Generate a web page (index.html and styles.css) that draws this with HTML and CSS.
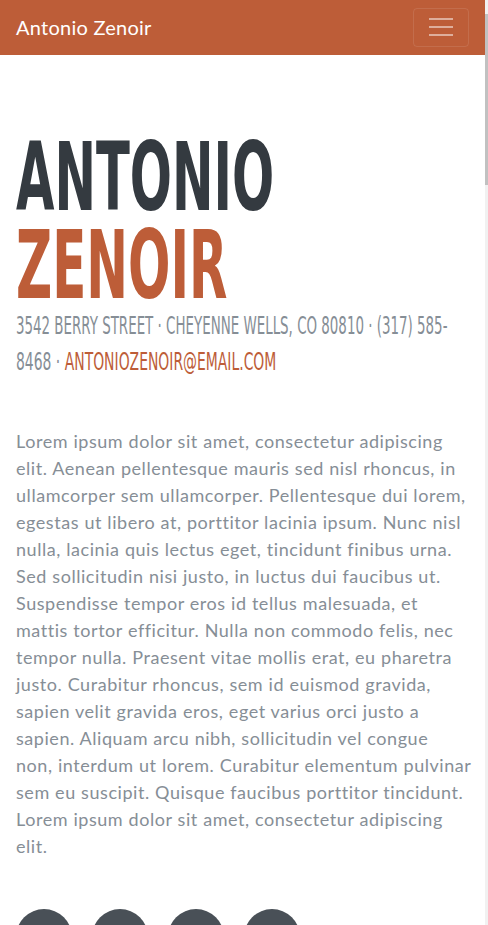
FILE: index.html
```html
<!DOCTYPE html>
<html lang="en">
<head>
<meta charset="utf-8">
<title>Antonio Zenoir - Resume</title>
<link rel="stylesheet" href="styles.css">
</head>
<body>
<div class="viewport">
  <div class="page">
    <nav class="navbar">
      <a class="brand" href="#about">Antonio Zenoir</a>
      <button class="toggler" type="button" aria-label="Toggle navigation">
        <span class="toggler-bar"></span>
        <span class="toggler-bar"></span>
        <span class="toggler-bar"></span>
      </button>
    </nav>
    <section class="resume-section" id="about">
      <h1 class="name">
        <span class="name-line"><span class="squeeze squeeze-h1a">Antonio</span></span>
        <span class="name-line accent"><span class="squeeze squeeze-h1b">Zenoir</span></span>
      </h1>
      <div class="subheading">
        <span class="sub-line"><span class="squeeze squeeze-s1">3542 Berry Street · Cheyenne Wells, CO 80810 · (317) 585-</span></span>
        <span class="sub-line"><span class="squeeze squeeze-s2">8468 · <a class="email" href="mailto:antoniozenoir@email.com">antoniozenoir@email.com</a></span></span>
      </div>
      <p class="lead">Lorem ipsum dolor sit amet, consectetur adipiscing<br>
elit. Aenean pellentesque mauris sed nisl rhoncus, in<br>
ullamcorper sem ullamcorper. Pellentesque dui lorem,<br>
egestas ut libero at, porttitor lacinia ipsum. Nunc nisl<br>
nulla, lacinia quis lectus eget, tincidunt finibus urna.<br>
Sed sollicitudin nisi justo, in luctus dui faucibus ut.<br>
Suspendisse tempor eros id tellus malesuada, et<br>
mattis tortor efficitur. Nulla non commodo felis, nec<br>
tempor nulla. Praesent vitae mollis erat, eu pharetra<br>
justo. Curabitur rhoncus, sem id euismod gravida,<br>
sapien velit gravida eros, eget varius orci justo a<br>
sapien. Aliquam arcu nibh, sollicitudin vel congue<br>
non, interdum ut lorem. Curabitur elementum pulvinar<br>
sem eu suscipit. Quisque faucibus porttitor tincidunt.<br>
Lorem ipsum dolor sit amet, consectetur adipiscing<br>
elit.</p>
      <div class="social-icons">
        <a class="social" href="#" aria-label="LinkedIn"></a>
        <a class="social" href="#" aria-label="GitHub"></a>
        <a class="social" href="#" aria-label="Twitter"></a>
        <a class="social" href="#" aria-label="Facebook"></a>
      </div>
    </section>
  </div>
  <div class="scrollbar"><div class="scrollbar-thumb"></div></div>
</div>
</body>
</html>
```
FILE: styles.css
```css
html, body {
  margin: 0;
  padding: 0;
  height: 100%;
  overflow: hidden;
  background: #fff;
}

.viewport {
  display: flex;
  height: 100vh;
}

.page {
  flex: 1;
  min-width: 0;
  overflow: hidden;
}

.scrollbar {
  width: 3px;
  background: #f1f1f1;
  display: flex;
  flex-direction: column;
}

.scrollbar-thumb {
  margin-top: 14px;
  height: 171px;
  background: #c1c1c1;
}

.navbar {
  height: 55px;
  box-sizing: border-box;
  background: #bd5d38;
  display: flex;
  align-items: center;
  justify-content: space-between;
  padding: 0 16px;
}

.brand {
  font-family: Lato, "Open Sans", sans-serif;
  font-size: 20px;
  letter-spacing: 0.25px;
  margin-top: -2px;
  color: #fff;
  text-decoration: none;
}

.toggler {
  width: 56px;
  height: 39px;
  margin-top: -1px;
  box-sizing: border-box;
  border: 1px solid rgba(255, 255, 255, 0.1);
  border-radius: 4px;
  background: transparent;
  display: flex;
  flex-direction: column;
  align-items: center;
  justify-content: center;
  gap: 6px;
  padding: 0;
}

.toggler-bar {
  display: block;
  width: 24px;
  height: 2px;
  background: rgba(255, 255, 255, 0.5);
}

.resume-section {
  padding: 79px 16px 0;
}

.name {
  margin: 0;
  font-family: "Liberation Sans Narrow", "DejaVu Sans Condensed", "Liberation Sans", sans-serif;
  font-stretch: condensed;
  font-weight: 700;
  font-size: 94px;
  line-height: 88px;
  text-transform: uppercase;
  color: #343a40;
}

.name-line,
.sub-line {
  display: block;
  white-space: nowrap;
}

.name-line {
  height: 88px;
}

.accent {
  color: #bd5d38;
}

.squeeze {
  display: inline-block;
  transform-origin: 0 50%;
}

.squeeze-h1a { transform: scaleX(0.587); }
.squeeze-h1b { transform: scaleX(0.59); }
.squeeze-s1 { transform: scaleX(0.621); }
.squeeze-s2 { transform: scaleX(0.645); }

.subheading {
  margin-top: -2px;
  font-family: "Liberation Sans Narrow", "DejaVu Sans Condensed", "Liberation Sans", sans-serif;
  font-stretch: condensed;
  font-weight: 400;
  font-size: 24px;
  line-height: 36px;
  text-transform: uppercase;
  color: #868e96;
}

.email {
  color: #bd5d38;
  text-decoration: none;
}

.lead {
  margin: 48px 0 0;
  font-family: Lato, "Open Sans", sans-serif;
  font-size: 18px;
  line-height: 27px;
  letter-spacing: 0.55px;
  word-spacing: 0.2px;
  white-space: nowrap;
  color: #868e96;
}

.social-icons {
  margin-top: 49px;
  display: flex;
  gap: 20px;
}

.social {
  display: block;
  width: 56px;
  height: 56px;
  border-radius: 50%;
  background: #495057;
}
```
